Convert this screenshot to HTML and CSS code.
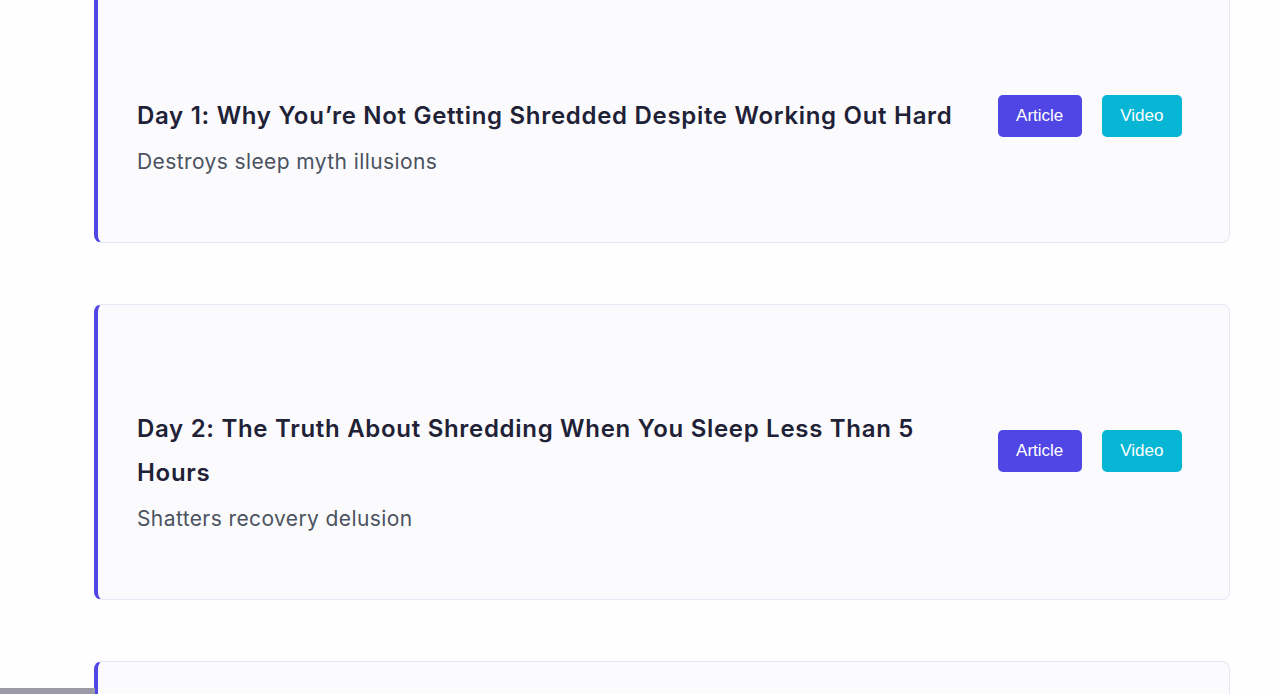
FILE: index.html
```html
<!DOCTYPE html>
<html lang="en">
<head>
  <meta charset="UTF-8" />
  <meta name="viewport" content="width=device-width, initial-scale=1.0"/>
  <title>Shred Plan - Daily Lessons</title>
  <link rel="stylesheet" href="styles.css">
</head>
<body>
  <div class="lessons">
    <div class="lesson">
      <div class="lesson-head">
        <h3>Day 1: Why You’re Not Getting Shredded Despite Working Out Hard</h3>
        <div class="links">
          <button class="btn article">Article</button>
          <button class="btn video">Video</button>
        </div>
      </div>
      <p>Destroys sleep myth illusions</p>
    </div>

    <div class="lesson">
      <div class="lesson-head">
        <h3>Day 2: The Truth About Shredding When You Sleep Less Than 5 Hours</h3>
        <div class="links">
          <button class="btn article">Article</button>
          <button class="btn video">Video</button>
        </div>
      </div>
      <p>Shatters recovery delusion</p>
    </div>

    <div class="lesson">
      <div class="lesson-head">
        <h3>Day 3: Loading...</h3>
        <div class="links">
          <button class="btn article">Article</button>
          <button class="btn video">Video</button>
        </div>
      </div>
      <p></p>
    </div>
  </div>
  <div class="progress"></div>
</body>
</html>
```

FILE: styles.css
```css
body { font-family: Inter, "Noto Sans", sans-serif; background: #fefeff; color: #1e1e38; margin: 0; padding: 0 50px 0 94px; overflow: hidden; }
.lessons { margin-top: -9px; display: flex; flex-direction: column; gap: 61px; }
.lesson { background: #fbfbfe; border: 1px solid #e6e6f4; border-left: 4px solid #4f46e5; border-radius: 8px; padding: 102px 47px 65px 39px; }
.lesson-head { display: flex; align-items: center; gap: 40px; }
.lesson-head h3 { flex: 1; margin: 0; font-size: 24px; font-weight: 600; letter-spacing: 0.7px; line-height: 44px; color: #1f2237; }
.links { display: flex; gap: 20px; }
.btn { font-family: "Liberation Sans", Arial, sans-serif; font-size: 17px; line-height: 20px; padding: 10px 17.5px; border: 1px solid transparent; border-radius: 5px; color: white; cursor: pointer; }
.btn.article { background: #4f46e5; }
.btn.video { background: #06b6d4; }
.lesson p { margin: 9px 0 0; font-size: 21px; letter-spacing: 0.4px; line-height: 30px; color: #4b5260; }
.progress { position: fixed; left: 0; bottom: 0; width: 95px; height: 6px; background: #9a9aa6; }
```
